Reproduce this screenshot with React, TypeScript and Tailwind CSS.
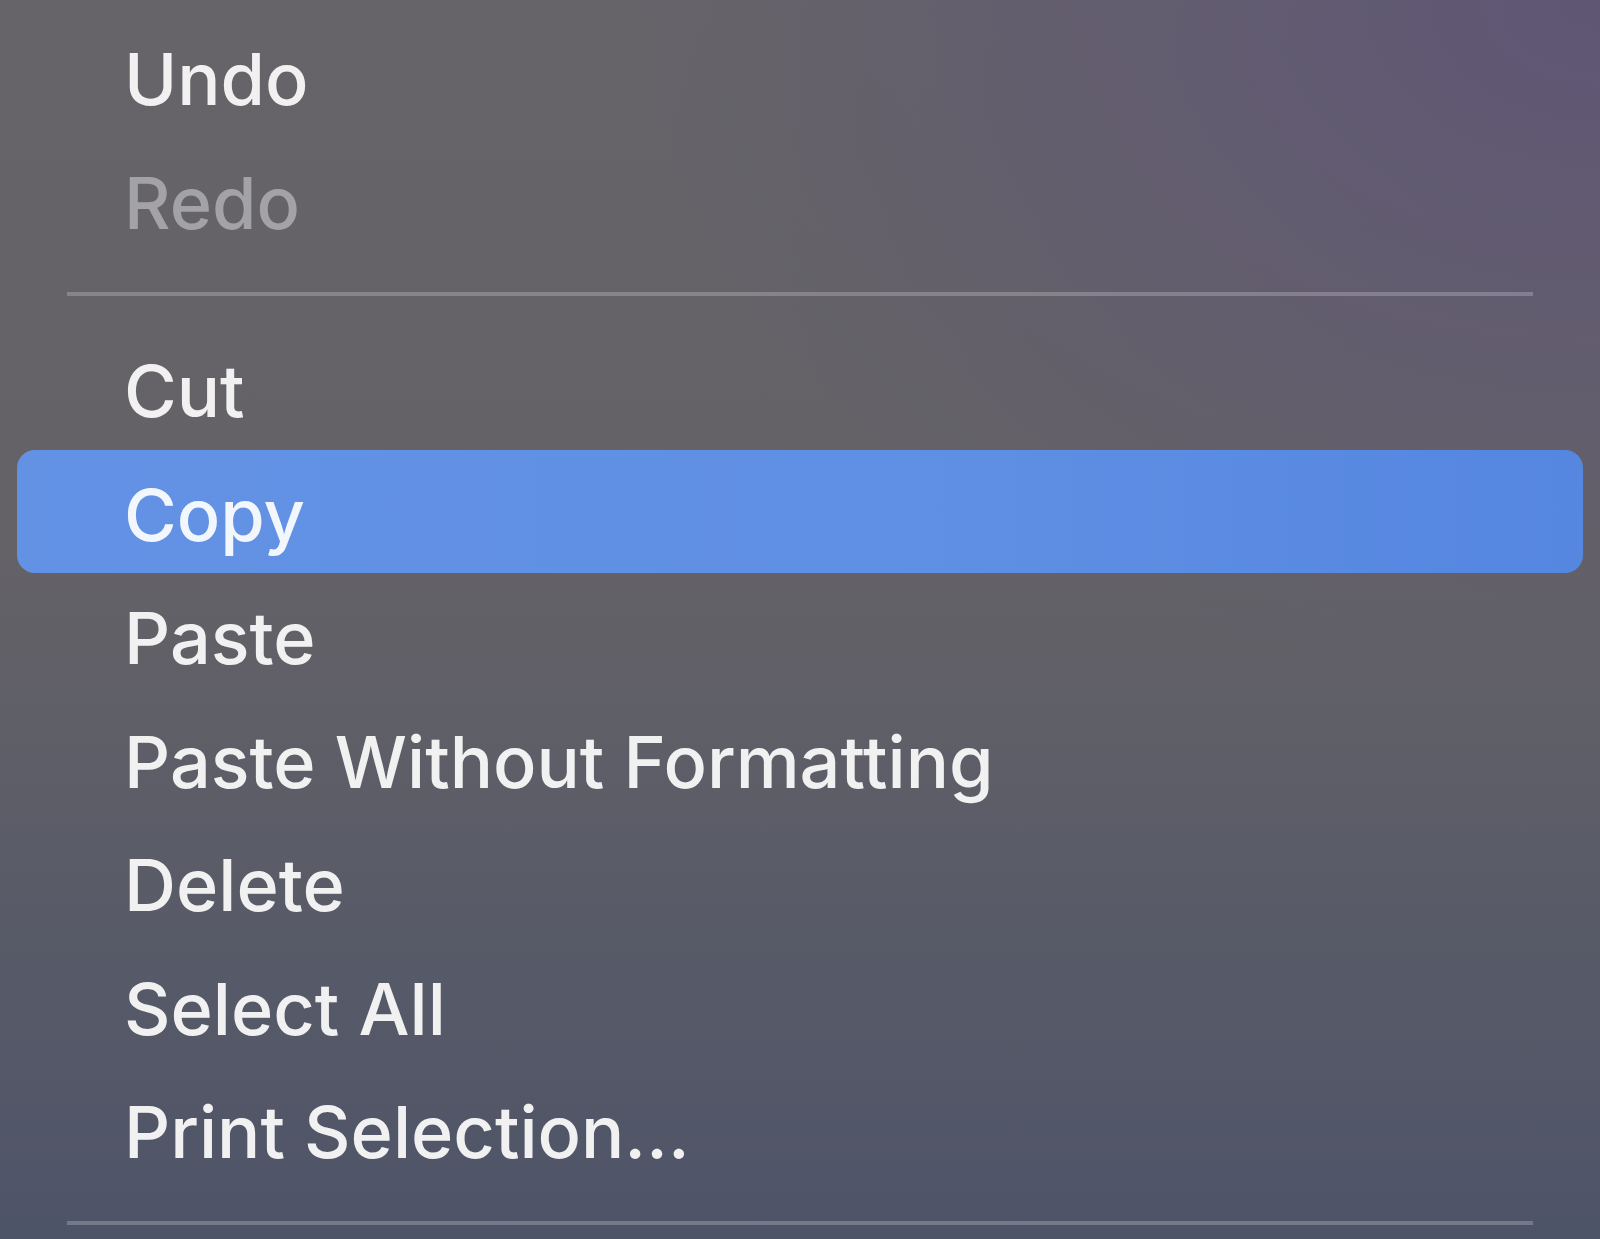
type Item = { label: string; disabled?: boolean; active?: boolean } | { separator: true };

const items: Item[] = [
  { label: "Undo" },
  { label: "Redo", disabled: true },
  { separator: true },
  { label: "Cut" },
  { label: "Copy", active: true },
  { label: "Paste" },
  { label: "Paste Without Formatting" },
  { label: "Delete" },
  { label: "Select All" },
  { label: "Print Selection…" },
  { separator: true },
];

function Separator() {
  return (
    <div className="h-[65px] flex items-center pl-[67px] pr-[67px]">
      <div className="h-[4px] w-full bg-white/[0.22]" />
    </div>
  );
}

function MenuRow({ label, disabled, active }: { label: string; disabled?: boolean; active?: boolean }) {
  return (
    <div className="px-[17px]">
      <div
        className={
          "h-[123.5px] flex items-center pl-[107px] pt-[7px] rounded-[18px] " +
          (active ? "bg-[linear-gradient(to_right,#6392e5,#5f8fe4_60%,#5586e0)]" : "")
        }
      >
        <span
          className={
            "text-[72px] leading-none font-medium tracking-normal " +
            (disabled ? "text-[#a3a2a7]" : active ? "text-[#f2f6fd]" : "text-[#f1f1f2]")
          }
        >
          {label}
        </span>
      </div>
    </div>
  );
}

export default function App() {
  return (
    <div
      className="w-[1600px] h-[1239px] overflow-hidden bg-[radial-gradient(ellipse_60%_55%_at_100%_0%,rgba(92,80,122,0.7),transparent),linear-gradient(to_bottom,#666469_0%,#646267_45%,#4e5468_100%)] pt-[14px]"
      style={{ fontFamily: "Inter, 'Noto Sans', sans-serif" }}
    >
      {items.map((item, i) =>
        "separator" in item ? (
          <Separator key={i} />
        ) : (
          <MenuRow key={i} label={item.label} disabled={item.disabled} active={item.active} />
        )
      )}
    </div>
  );
}
